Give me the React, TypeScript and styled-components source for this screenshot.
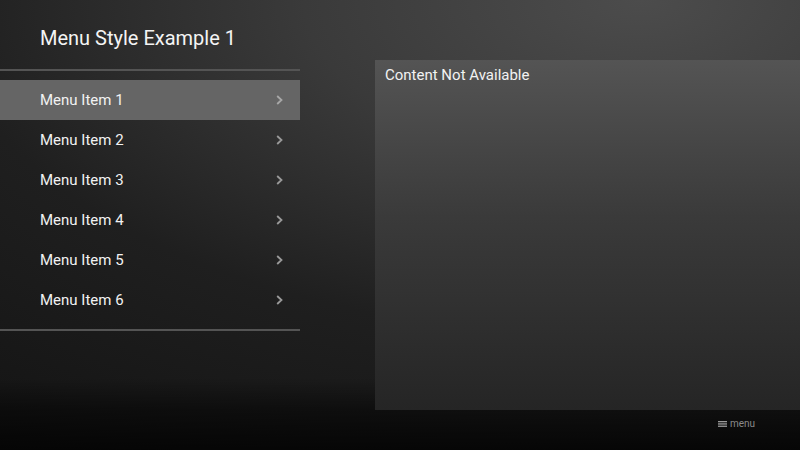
import React from "react";
import styled, { createGlobalStyle } from "styled-components";

const GlobalStyle = createGlobalStyle`
  html, body { margin: 0; padding: 0; background: #000; }
  body { font-family: Roboto, "Liberation Sans", sans-serif; }
  * { box-sizing: border-box; }
`;

const Screen = styled.div`
  width: 800px;
  height: 450px;
  overflow: hidden;
  display: flex;
  flex-direction: column;
  background:
    linear-gradient(
      to bottom,
      rgba(0, 0, 0, 0) 84%,
      rgba(0, 0, 0, 0.45) 91%,
      rgba(0, 0, 0, 0.75) 100%
    ),
    radial-gradient(
      ellipse 150% 130% at 80% 0%,
      #4c4c4c 0%,
      #3a3a3a 28%,
      #1f1f1f 58%,
      #111 100%
    );
  color: #fff;
`;

const Main = styled.div`
  height: 410px;
  display: flex;
`;

const Sidebar = styled.nav`
  width: 300px;
  display: flex;
  flex-direction: column;
`;

const Title = styled.h1`
  margin: 0;
  padding: 26px 0 19px 40px;
  font-size: 20px;
  line-height: 24px;
  font-weight: 400;
  color: #f4f4f4;
`;

const Divider = styled.div<{ $gap?: number }>`
  height: 2px;
  background: #545454;
  margin-top: ${(p) => p.$gap ?? 0}px;
`;

const List = styled.ul`
  list-style: none;
  margin: 0;
  padding: 9px 0 0;
`;

const Item = styled.li<{ $active?: boolean }>`
  height: 40px;
  display: flex;
  align-items: center;
  justify-content: space-between;
  padding: 0 17px 0 40px;
  font-size: 15px;
  line-height: 40px;
  color: #f2f2f2;
  background: ${(p) => (p.$active ? "#656565" : "transparent")};
`;

const Chevron = styled.svg`
  width: 7px;
  height: 10px;
  display: block;
`;

const Panel = styled.section`
  flex: 1;
  margin: 60px 0 0 75px;
  padding: 5px 10px;
  background: linear-gradient(to bottom, #545454 0%, #3a3a3a 45%, #252525 100%);
`;

const PanelText = styled.div`
  font-size: 15px;
  line-height: 20px;
  color: #f2f2f2;
`;

const Footer = styled.footer`
  flex: 1;
  display: flex;
  justify-content: flex-end;
  align-items: flex-start;
  padding: 7px 45px 0 0;
`;

const MenuHint = styled.div`
  display: flex;
  align-items: center;
  gap: 3px;
  font-size: 10px;
  line-height: 14px;
  color: #8a8a8a;
`;

const items = [1, 2, 3, 4, 5, 6];

export default function App() {
  return (
    <>
      <GlobalStyle />
      <Screen>
        <Main>
          <Sidebar>
            <Title>Menu Style Example 1</Title>
            <Divider />
            <List>
              {items.map((n) => (
                <Item key={n} $active={n === 1}>
                  <span>Menu Item {n}</span>
                  <Chevron viewBox="0 0 7 10">
                    <polyline
                      points="1.2,1 5.5,5 1.2,9"
                      fill="none"
                      stroke={n === 1 ? "#a8a8a8" : "#9a9a9a"}
                      strokeWidth="1.8"
                    />
                  </Chevron>
                </Item>
              ))}
            </List>
            <Divider $gap={9} />
          </Sidebar>
          <Panel>
            <PanelText>Content Not Available</PanelText>
          </Panel>
        </Main>
        <Footer>
          <MenuHint>
            <svg width="9" height="6" viewBox="0 0 9 6">
              <rect x="0" y="0" width="9" height="1.3" fill="#9a9a9a" />
              <rect x="0" y="2.3" width="9" height="1.3" fill="#9a9a9a" />
              <rect x="0" y="4.6" width="9" height="1.3" fill="#9a9a9a" />
            </svg>
            <span>menu</span>
          </MenuHint>
        </Footer>
      </Screen>
    </>
  );
}
